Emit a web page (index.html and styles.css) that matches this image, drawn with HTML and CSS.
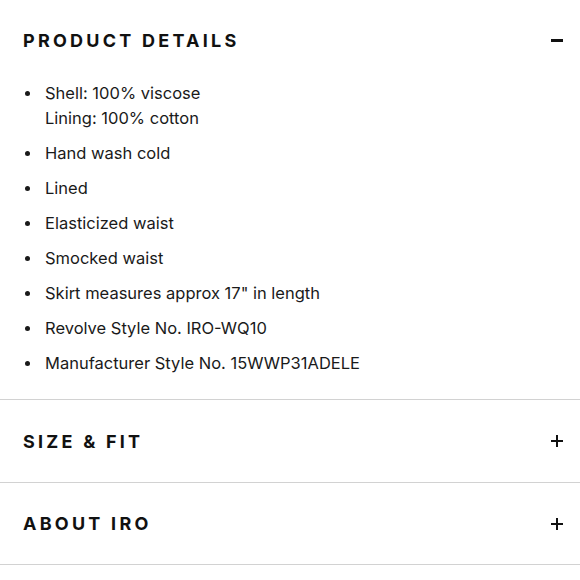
FILE: index.html
```html
<!DOCTYPE html>
<html lang="en">
<head>
<meta charset="utf-8">
<link rel="stylesheet" href="styles.css">
</head>
<body>
<div class="accordion">
  <section class="panel">
    <div class="panel-head">
      <h2 class="panel-title">PRODUCT DETAILS</h2>
      <span class="icon icon-minus" aria-hidden="true"></span>
    </div>
    <ul class="details">
      <li>Shell: 100% viscose<br>Lining: 100% cotton</li>
      <li>Hand wash cold</li>
      <li>Lined</li>
      <li>Elasticized waist</li>
      <li>Smocked waist</li>
      <li>Skirt measures approx 17" in length</li>
      <li>Revolve Style No. IRO-WQ10</li>
      <li>Manufacturer Style No. 15WWP31ADELE</li>
    </ul>
  </section>
  <section class="panel panel-closed">
    <div class="panel-head">
      <h2 class="panel-title">SIZE &amp; FIT</h2>
      <span class="icon icon-plus" aria-hidden="true"></span>
    </div>
  </section>
  <section class="panel">
    <div class="panel-head">
      <h2 class="panel-title">ABOUT IRO</h2>
      <span class="icon icon-plus" aria-hidden="true"></span>
    </div>
  </section>
</div>
</body>
</html>
```
FILE: styles.css
```css
html, body {
  margin: 0;
  padding: 0;
  background: #ffffff;
}
body {
  font-family: Inter, "Noto Sans", sans-serif;
  color: #111111;
}
.accordion {
  display: flex;
  flex-direction: column;
}
.panel {
  border-bottom: 1px solid #d2d2d2;
}
.panel-head {
  height: 81px;
  display: flex;
  align-items: center;
  justify-content: space-between;
  padding: 0 17px 0 23px;
}
.panel-closed .panel-head {
  height: 82px;
}
.panel-title {
  margin: 0;
  font-size: 18px;
  font-weight: 700;
  letter-spacing: 0.18em;
  color: #111111;
}
.icon {
  position: relative;
  width: 12px;
  height: 12px;
  flex: none;
}
.icon::before,
.icon::after {
  content: "";
  position: absolute;
  background: #111111;
}
.icon::before {
  left: 0;
  right: 0;
  top: 5px;
  height: 2px;
}
.icon-minus::before {
  top: 4.5px;
  height: 2.5px;
}
.icon-plus::after {
  top: 0;
  bottom: 0;
  left: 5px;
  width: 2px;
}
.icon-minus::after {
  display: none;
}
.details {
  list-style: none;
  margin: 0;
  padding: 0 23px 23px 24px;
  display: flex;
  flex-direction: column;
  gap: 10px;
  font-size: 16.5px;
  line-height: 25px;
  color: #1a1a1a;
}
.details li {
  position: relative;
  padding-left: 21px;
}
.details li::before {
  content: "";
  position: absolute;
  left: 1px;
  top: 10px;
  width: 5px;
  height: 5px;
  border-radius: 50%;
  background: #1a1a1a;
}
```
